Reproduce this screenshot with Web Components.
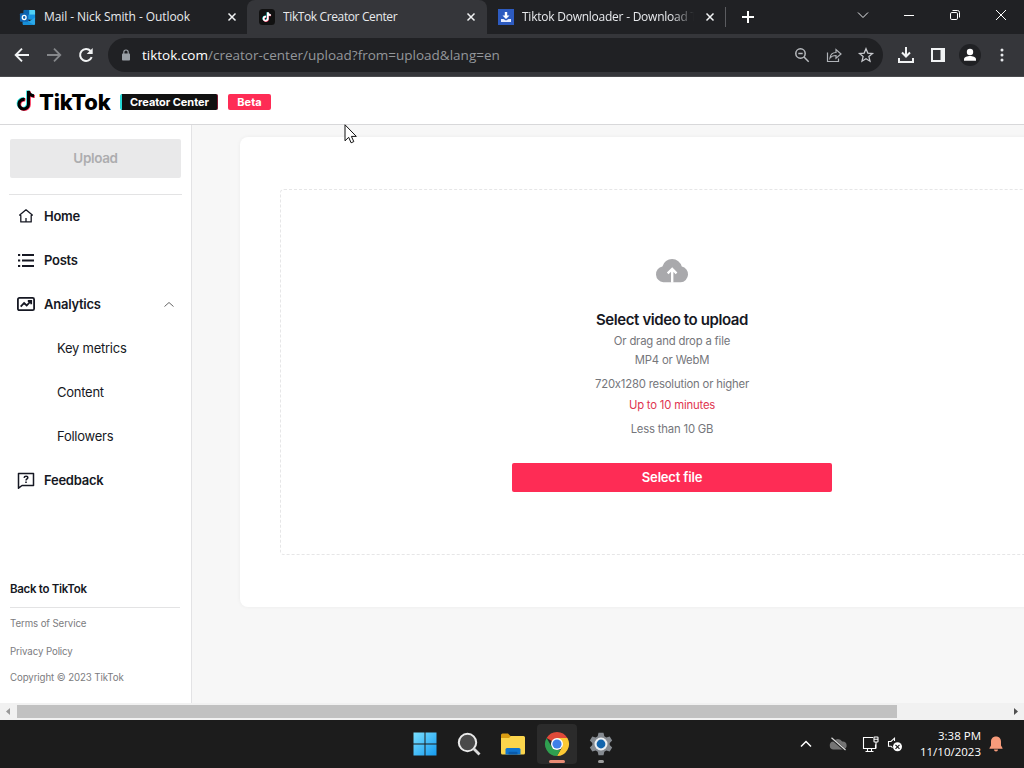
<!DOCTYPE html>
<html lang="en">
<head>
<meta charset="utf-8">
<title>TikTok Creator Center</title>
<style>
html, body {
  margin: 0;
  height: 100%;
  overflow: hidden;
}
body {
  font-family: "Open Sans", "Noto Sans", sans-serif;
}
</style>
</head>
<body>
<desktop-screen></desktop-screen>

<script>
const icons = {
  outlook: `<svg viewBox="0 0 18 18"><rect x="5" y="1" width="12" height="10" rx="1" fill="#28a8ea"/><path d="M5 1h6v5H5z" fill="#0a64ad"/><path d="M11 1h5a1 1 0 0 1 1 1v4h-6z" fill="#50d0f5"/><path d="M11 6h6v5h-6z" fill="#1490df"/><path d="M4 9l7 4 6-4v7a1 1 0 0 1-1 1H5a1 1 0 0 1-1-1z" fill="#2ba9ea"/><path d="M4 10l12 7H5a1 1 0 0 1-1-1z" fill="#178fd8"/><rect x="1" y="4.500" width="9" height="9" rx="1" fill="#1066b5"/><ellipse cx="5.500" cy="9" rx="2" ry="2.200" fill="none" stroke="#fff" stroke-width="1.400"/></svg>`,
  tiktokTab: `<svg viewBox="0 0 16 16"><rect width="16" height="16" rx="3.500" fill="#111"/><g fill="none" stroke-width="1.700"><path d="M6.600 7.300a2.100 2.100 0 1 0 1.800 2.100V3.200c.2 1.700 1.300 2.600 3 2.700" stroke="#25f4ee"/><path d="M7.300 7.900a2.100 2.100 0 1 0 1.800 2.100V3.800c.2 1.700 1.300 2.600 3 2.700" stroke="#fe2c55"/><path d="M7 7.600a2.100 2.100 0 1 0 1.800 2.100V3.400c.2 1.700 1.300 2.600 3 2.700" stroke="#fff"/></g></svg>`,
  downloader: `<svg viewBox="0 0 16 16"><rect width="16" height="16" fill="#2d5bc0"/><path d="M6.800 3h2.400v3.600h2.300L8 10 4.500 6.600h2.300z" fill="#fff"/><path d="M3 10h2.500L8 11.500l2.500-1.500H13v3H3z" fill="#e4ecff"/></svg>`,
  close: `<svg viewBox="0 0 10 10"><path d="M1.500 1.500l7 7m0-7l-7 7" stroke="#f1f3f4" stroke-width="1.500"/></svg>`,
  plus: `<svg viewBox="0 0 14 14"><path d="M7 1v12M1 7h12" stroke="#fff" stroke-width="2"/></svg>`,
  chevron: `<svg viewBox="0 0 12 12"><path d="M1 3.500l5 5 5-5" fill="none" stroke="#e8eaed" stroke-width="1"/></svg>`,
  minimize: `<svg viewBox="0 0 12 12"><path d="M1 6.500h10" stroke="#fff"/></svg>`,
  restore: `<svg viewBox="0 0 12 12"><g fill="none" stroke="#fff"><rect x="1.500" y="3.500" width="7" height="7" rx="1.300"/><path d="M3.500 1.500h5a2 2 0 0 1 2 2v5"/></g></svg>`,
  windowClose: `<svg viewBox="0 0 12 12"><path d="M1 1l10 10M11 1L1 11" stroke="#fff"/></svg>`,
  back: `<svg viewBox="0 0 16 16"><path d="M15 8H2M8 1.700L1.700 8 8 14.300" fill="none" stroke="#f1f3f4" stroke-width="1.900"/></svg>`,
  forward: `<svg viewBox="0 0 16 16"><path d="M1 8h13M8 1.700L14.300 8 8 14.300" fill="none" stroke="#85878a" stroke-width="1.800"/></svg>`,
  reload: `<svg viewBox="0 0 16 16"><path d="M13.700 10.200A6 6 0 1 1 12.600 4" fill="none" stroke="#f1f3f4" stroke-width="2"/><path d="M14.700 1v6h-6z" fill="#f1f3f4"/></svg>`,
  lock: `<svg viewBox="0 0 10 12"><rect x="1" y="4.500" width="8" height="7" rx=".8" fill="#9aa0a6"/><path d="M2.800 5V3.200a2.200 2.200 0 0 1 4.400 0V5" fill="none" stroke="#9aa0a6" stroke-width="1.200"/></svg>`,
  zoomOut: `<svg viewBox="0 0 16 16"><g fill="none" stroke="#b8bbbf" stroke-width="1.500"><circle cx="6.500" cy="6.500" r="4.700"/><path d="M10 10l4.700 4.700M4.300 6.500h4.400"/></g></svg>`,
  share: `<svg viewBox="0 0 16 16"><g fill="none" stroke="#b0b3b8" stroke-width="1.200"><path d="M1.500 5.500v9h11v-3"/><path d="M4 11c.5-4 3-5.500 6-5.500V2.500L15 7l-5 4.300V8.500c-2.500 0-4.500.5-6 2.500z"/></g></svg>`,
  star: `<svg viewBox="0 0 16 16"><path d="M8 1.800l1.800 4.300 4.700.4-3.600 3.100 1.100 4.600-4-2.400-4 2.400 1.100-4.600-3.600-3.100 4.700-.4z" fill="none" stroke="#c6c8cc" stroke-width="1.300"/></svg>`,
  download: `<svg viewBox="0 0 18 18"><path d="M9 1v9M5 6.500l4 4 4-4M2 12v4h14v-4" fill="none" stroke="#f1f3f4" stroke-width="2"/></svg>`,
  panel: `<svg viewBox="0 0 14 14"><rect x="1" y="1" width="12" height="12" fill="none" stroke="#f1f3f4" stroke-width="2"/><path d="M9.500 1H13v12H9.500z" fill="#f1f3f4"/></svg>`,
  person: `<svg viewBox="0 0 22 22"><circle cx="11" cy="11" r="11" fill="#202124"/><circle cx="11" cy="8" r="3.200" fill="#fff"/><path d="M5 16.800v-1.600c0-2 3.500-3.200 6-3.200s6 1.200 6 3.200v1.600z" fill="#fff"/></svg>`,
  dots: `<svg viewBox="0 0 4 14"><g fill="#e8eaed"><circle cx="2" cy="2" r="1.500"/><circle cx="2" cy="7" r="1.500"/><circle cx="2" cy="12" r="1.500"/></g></svg>`,
  note: `<svg viewBox="0 0 20 24"><g fill="none" stroke-width="3.200"><path d="M7.800 10.300a5 5 0 1 0 4 4.900V1.500c.2 3.200 2.400 5 5.800 5.200" stroke="#25e6e0"/><path d="M9.400 11.500a5 5 0 1 0 4 4.900V2.700c.2 3.200 2.400 5 5.800 5.200" stroke="#fe2c55"/><path d="M8.600 10.900a5 5 0 1 0 4 4.900V2c.2 3.200 2.400 5 5.800 5.200" stroke="#000"/></g></svg>`,
  home: `<svg viewBox="0 0 18 18"><path d="M9 2.800l6.300 5.300-1.100.5v6.300H3.800V8.600l-1.100-.5zM9 11v4" fill="none" stroke="#161823" stroke-width="1.300" stroke-linejoin="round"/></svg>`,
  list: `<svg viewBox="0 0 18 18"><path d="M1 4h2.200M1 9.500h2.200M1 15h2.200M5 4h12M5 9.500h12M5 15h12" stroke="#161823" stroke-width="1.800"/></svg>`,
  analytics: `<svg viewBox="0 0 18 18"><g fill="none" stroke="#161823" stroke-width="1.800"><rect x=".9" y="2.900" width="16.200" height="12.300" rx="1.500"/><path d="M3.700 11.700L7.100 8l2.600 2.500 4-4.300M10.800 6h3.400v3.300"/></g></svg>`,
  feedback: `<svg viewBox="0 0 18 18"><path d="M1.500 2.500h15v12H5l-3.500 2.700z" fill="none" stroke="#161823" stroke-width="1.500" stroke-linejoin="round"/><path d="M7.100 6.900c.2-2.500 4.100-2.200 3.700 0C10.600 8 9 8 9 9.600" fill="none" stroke="#161823" stroke-width="1.500"/><path d="M8.200 10.600h1.600V12H8.200z" fill="#161823"/></svg>`,
  up: `<svg viewBox="0 0 12 12"><path d="M1.500 8.500l4.500-4 4.500 4" fill="none" stroke="#555" stroke-width=".9"/></svg>`,
  cloud: `<svg viewBox="0 0 33 25"><path d="M8 24.400a7.800 7.800 0 0 1-.8-15.400A9.700 9.700 0 0 1 26 9.200a7.700 7.700 0 0 1-1 15.200z" fill="#a9a9ac"/><path d="M16.700 24.800V12.300M12.300 15.700l4.400-4.200 4.200 4.200" fill="none" stroke="#fff" stroke-width="2.300"/></svg>`,
  left: `<svg viewBox="0 0 4 7"><path d="M4 0v7L0 3.500z" fill="#999"/></svg>`,
  right: `<svg viewBox="0 0 4 7"><path d="M0 0v7l4-3.500z" fill="#505050"/></svg>`,
  cursor: `<svg viewBox="0 0 14 20"><path d="M1 .8v16l3.700-3.500 2.400 5.500 2.700-1.200-2.400-5.200h4.900z" fill="#fff" stroke="#111" stroke-width="1"/></svg>`,
  windows: `<svg viewBox="0 0 24 24"><defs><linearGradient id="g" x2="1" y2="1"><stop stop-color="#7ae0ff"/><stop offset="1" stop-color="#159bf0"/></linearGradient></defs><path d="M.5.500h11v11H.5zM12.500.500h11v11h-11zM.5 12.500h11v11H.5zM12.500 12.500h11v11h-11z" fill="url(#g)"/></svg>`,
  search: `<svg viewBox="0 0 24 24"><circle cx="10.500" cy="10.500" r="8.700" fill="#4a4a4a" stroke="#e9e9e9" stroke-width="2"/><path d="M17 17l5.500 5.500" stroke="#dadada" stroke-width="2.800"/></svg>`,
  folder: `<svg viewBox="0 0 26 24"><path d="M1 3a1.500 1.500 0 0 1 1.500-1.500H8l2.500 2.500H15v6H1z" fill="#d99c12"/><path d="M1 6h8l2-2h12.500A1.500 1.500 0 0 1 25 5.500V21a1.500 1.500 0 0 1-1.500 1.500h-21A1.500 1.500 0 0 1 1 21z" fill="#fbd54c"/><path d="M5.500 22.500v-5A1.500 1.500 0 0 1 7 16h12a1.500 1.500 0 0 1 1.500 1.500v5z" fill="#0f74cf"/><path d="M8.500 22.500v-1.700a1 1 0 0 1 1-1h7a1 1 0 0 1 1 1v1.700z" fill="#0a5bac"/></svg>`,
  chrome: `<svg viewBox="0 0 24 24"><path d="M12 12L1.600 6A12 12 0 0 1 22.400 6z" fill="#e04a3a"/><path d="M12 6h10.400A12 12 0 0 1 12 24l5.200-9z" fill="#fcc934"/><path d="M1.600 6l5.200 9 5.200 3h3.400L12 24A12 12 0 0 1 1.600 6z" fill="#2f9f50"/><circle cx="12" cy="12" r="6" fill="#fff"/><circle cx="12" cy="12" r="4.600" fill="#3f7fe8"/></svg>`,
  settings: `<svg viewBox="0 0 24 24"><path d="M9.500.8h5l.8 3.400 2 1.200 3.400-1 2.500 4.200L20.700 11v2l2.500 2.400-2.500 4.200-3.400-1-2 1.200-.8 3.400h-5l-.8-3.400-2-1.200-3.400 1-2.500-4.200L3.300 13v-2L.8 8.600l2.500-4.200 3.400 1 2-1.200z" fill="#858a90"/><circle cx="12" cy="12" r="6.500" fill="#eceff2"/><circle cx="12" cy="12" r="4.400" fill="#1265ad"/></svg>`,
  trayUp: `<svg viewBox="0 0 12 8"><path d="M1 6.500l5-5 5 5" fill="none" stroke="#fff" stroke-width="1.500"/></svg>`,
  cloudOff: `<svg viewBox="0 0 18 14"><path d="M5 12.500a4 4 0 0 1-.5-8 5 5 0 0 1 8.700 0A4 4 0 0 1 14 12.500z" fill="#747474"/><path d="M2 .8L16 13" stroke="#1c1c1c" stroke-width="2.400"/><path d="M2.500.8L16.500 13" stroke="#ddd" stroke-width="1.200"/></svg>`,
  network: `<svg viewBox="0 0 17 17"><g fill="none" stroke="#fff" stroke-width="1.100"><path d="M11 1.500H1.500v11h12V8.500M5.500 12.500v3m4-3v3M3.500 15.500h8"/><rect x="12" y="1" width="4" height="5" rx=".6"/><path d="M12 3.200h4M14 6v6.500"/></g></svg>`,
  volume: `<svg viewBox="0 0 16 15"><path d="M7.500 4V1.200L4 4.500H1.500v4.700H4l1.500 1.500" fill="none" stroke="#fff" stroke-width="1.100"/><circle cx="10.500" cy="9.800" r="4.500" fill="#fff"/><path d="M8.500 7.800l4 4m0-4l-4 4" stroke="#1c1c1c" stroke-width="1.200"/></svg>`,
  bell: `<svg viewBox="0 0 14 16"><path d="M7 .5c3.200 0 5 2.200 5 5v4l1.500 2.500v.8H.5V12L2 9.500v-4c0-2.800 1.800-5 5-5zM5 13.600h4a2 2 0 0 1-4 0z" fill="#f79b7b"/></svg>`
};

class UiIcon extends HTMLElement {
  constructor() {
    super();
    this.attachShadow({ mode: "open" });
  }
  connectedCallback() {
    const w = this.getAttribute("w") || 16;
    const h = this.getAttribute("h") || w;
    this.shadowRoot.innerHTML = `
<style>
:host { display: block; flex: none; width: ${w}px; height: ${h}px; }
svg { display: block; width: 100%; height: 100%; overflow: visible; }
</style>${icons[this.getAttribute("name")]}`;
  }
}
customElements.define("ui-icon", UiIcon);

// registers an element whose shadow root is cloned from the given markup
function define(name, html) {
  const template = document.createElement("template");
  template.innerHTML = html;
  customElements.define(name, class extends HTMLElement {
    constructor() {
      super();
      this.attachShadow({ mode: "open" });
      this.shadowRoot.appendChild(template.content.cloneNode(true));
    }
  });
}

define("browser-tab", `
<style>
:host {
  display: flex;
  align-items: center;
  box-sizing: border-box;
  width: 240px;
  height: 34px;
  padding: 0 11px 0 12px;
  color: #e8eaed;
  font-size: 12px;
}
:host([active]) { background: #35363a; border-radius: 8px 8px 0 0; }
.title {
  flex: 1;
  margin-left: 8px;
  white-space: nowrap;
  overflow: hidden;
  line-height: 20px;
}
:host([fade]) .title { -webkit-mask-image: linear-gradient(90deg, #000 150px, transparent 172px); }
ui-icon { margin-left: 6px; }
</style>
<slot name="icon"></slot>
<div class="title"><slot></slot></div>
<ui-icon name="close" w="10"></ui-icon>
`);

define("tab-strip", `
<style>
:host { display: flex; height: 34px; background: #202124; align-items: center; }
.first { width: 247px; padding: 0 10px 0 19px; }
.last { padding-left: 11px; padding-right: 12px; }
.sep { width: 1px; height: 20px; background: #5b5c60; margin-left: -2px; }
.plus { margin-left: 15px; }
.controls { display: flex; margin-left: auto; padding: 0 17px 5px 0; gap: 34px; }
</style>
<browser-tab class="first"><ui-icon slot="icon" name="outlook" w="17"></ui-icon><span style="letter-spacing:-.08px">Mail - Nick Smith - Outlook</span></browser-tab>
<browser-tab active><ui-icon slot="icon" name="tiktokTab" w="16"></ui-icon><span style="letter-spacing:-.38px">TikTok Creator Center</span></browser-tab>
<browser-tab class="last" fade><ui-icon slot="icon" name="downloader" w="16"></ui-icon><span style="letter-spacing:-.24px">Tiktok Downloader - Download TikTok</span></browser-tab>
<div class="sep"></div>
<ui-icon class="plus" name="plus" w="14"></ui-icon>
<div class="controls">
  <ui-icon name="chevron" w="12"></ui-icon>
  <ui-icon name="minimize" w="12"></ui-icon>
  <ui-icon name="restore" w="12"></ui-icon>
  <ui-icon name="windowClose" w="12"></ui-icon>
</div>
`);

define("address-bar", `
<style>
:host {
  display: flex;
  align-items: center;
  box-sizing: border-box;
  height: 43px;
  padding: 0 19px 0 14px;
  background: #35363a;
  border-bottom: 1px solid #4a4b4e;
}
.field {
  display: flex;
  align-items: center;
  box-sizing: border-box;
  width: 775px;
  height: 34px;
  padding: 0 9px 0 13px;
  margin: 0 14px 0 14px;
  border-radius: 17px;
  background: #202124;
  font-size: 13.500px;
  color: #94979b;
}
.url { flex: 1; margin-left: 11px; line-height: 22px; white-space: nowrap; }
.url b { font-weight: 400; color: #fff; }
.actions { display: flex; gap: 16px; }
</style>
<ui-icon name="back" w="16"></ui-icon>
<ui-icon name="forward" w="16" style="margin-left:16px"></ui-icon>
<ui-icon name="reload" w="16" style="margin-left:16px"></ui-icon>
<div class="field">
  <ui-icon name="lock" w="10" h="12"></ui-icon>
  <div class="url"><b>tiktok.com</b>/creator-center/upload?from=upload&amp;lang=en</div>
  <div class="actions">
    <ui-icon name="zoomOut" w="16"></ui-icon>
    <ui-icon name="share" w="16"></ui-icon>
    <ui-icon name="star" w="16"></ui-icon>
  </div>
</div>
<ui-icon name="download" w="18"></ui-icon>
<ui-icon name="panel" w="14" style="margin-left:16px"></ui-icon>
<ui-icon name="person" w="22" style="margin-left:14px"></ui-icon>
<ui-icon name="dots" w="4" h="14" style="margin-left:19px"></ui-icon>
`);

define("site-header", `
<style>
:host {
  display: flex;
  align-items: center;
  box-sizing: border-box;
  height: 48px;
  padding: 2px 0 0 16px;
  background: #fff;
  border-bottom: 1px solid #d8d8da;
  font-family: Inter, "Liberation Sans", sans-serif;
}
.brand { margin-left: 3px; width: 81px; font-size: 22px; font-weight: 800; letter-spacing: -.2px; line-height: 24px; color: #000; }
.tag {
  box-sizing: border-box;
  height: 16px;
  border-radius: 2px;
  font-size: 11px;
  font-weight: 700;
  line-height: 16px;
  text-align: center;
  color: #fff;
}
.dark { width: 98px; background: #111; border-left: 2px solid #25d9d5; border-right: 1px solid #7d1830; letter-spacing: -.05px; }
.beta { width: 43px; margin-left: 10px; background: #fe2c55; }
</style>
<ui-icon name="note" w="20" h="23" style="margin-top:-3px"></ui-icon>
<div class="brand">TikTok</div>
<div class="tag dark">Creator Center</div>
<div class="tag beta">Beta</div>
`);

define("nav-item", `
<style>
:host {
  display: flex;
  align-items: center;
  height: 44px;
  padding: 0 16px 0 17px;
  font-size: 13px;
  font-weight: 600;
  letter-spacing: -.25px;
  color: #161823;
}
:host([sub]) { padding-left: 57px; font-weight: 400; }
.text { flex: 1; }
::slotted([slot=icon]) { margin-right: 9px; }
</style>
<slot name="icon"></slot>
<div class="text"><slot></slot></div>
<slot name="end"></slot>
`);

define("side-bar", `
<style>
:host {
  display: flex;
  flex-direction: column;
  flex: none;
  box-sizing: border-box;
  width: 192px;
  background: #fff;
  border-right: 1px solid #e3e3e5;
}
.upload {
  height: 39px;
  margin: 14px 10px 16px;
  border-radius: 2px;
  background: #e9e9ea;
  color: #adadaf;
  font-size: 13.500px;
  font-weight: 600;
  letter-spacing: -.35px;
  line-height: 39px;
  text-align: center;
}
nav { margin-top: -1px; }
.line { height: 1px; background: #e3e3e4; margin: 0 9px; }
.foot { margin-top: auto; padding-bottom: 15px; font-size: 9.700px; color: #7c7c80; }
.foot div { padding-left: 10px; line-height: 20px; letter-spacing: -.1px; }
.foot .back { font-size: 11.500px; font-weight: 600; letter-spacing: -.3px; color: #161823; margin-bottom: 8px; }
.foot .line { padding: 0; margin: 0 11px 6px 10px; line-height: 0; }
</style>
<div class="upload">Upload</div>
<div class="line"></div>
<nav>
  <nav-item><ui-icon slot="icon" name="home" w="18"></ui-icon>Home</nav-item>
  <nav-item><ui-icon slot="icon" name="list" w="18"></ui-icon>Posts</nav-item>
  <nav-item><ui-icon slot="icon" name="analytics" w="18"></ui-icon>Analytics<ui-icon slot="end" name="up" w="12"></ui-icon></nav-item>
  <nav-item sub>Key metrics</nav-item>
  <nav-item sub>Content</nav-item>
  <nav-item sub>Followers</nav-item>
  <nav-item><ui-icon slot="icon" name="feedback" w="18"></ui-icon>Feedback</nav-item>
</nav>
<div class="foot">
  <div class="back">Back to TikTok</div>
  <div class="line"></div>
  <div style="margin-bottom:8px">Terms of Service</div>
  <div style="margin-bottom:6px">Privacy Policy</div>
  <div>Copyright © 2023 TikTok</div>
</div>
`);

define("upload-card", `
<style>
:host {
  display: block;
  box-sizing: border-box;
  flex: none;
  width: 864px;
  height: 470px;
  margin: 12px 0 0 48px;
  padding: 52px 40px;
  border-radius: 8px;
  background: #fff;
  box-shadow: 0 0 4px rgba(0, 0, 0, .05);
}
.drop {
  display: flex;
  flex-direction: column;
  align-items: center;
  box-sizing: border-box;
  height: 366px;
  padding-top: 67px;
  border: 1px dashed #e6e6e7;
  border-radius: 4px;
  font-size: 11.300px;
  font-feature-settings: "calt" 0;
  letter-spacing: -.18px;
  line-height: 20px;
  color: #75767b;
}
.title { margin-top: 26px; font-size: 15px; font-weight: 600; letter-spacing: -.4px; line-height: 22px; color: #161823; }
.limit { margin: 1px 0 4px; color: #e0344f; }
.select {
  width: 320px;
  height: 29px;
  margin-top: 24px;
  border-radius: 2px;
  background: #fe2c55;
  color: #fff;
  font-size: 13px;
  font-weight: 600;
  line-height: 29px;
  text-align: center;
}
</style>
<div class="drop">
  <ui-icon name="cloud" w="34" h="26"></ui-icon>
  <div class="title">Select video to upload</div>
  <div>Or drag and drop a file</div>
  <div style="line-height:18px;margin-bottom:5px">MP4 or WebM</div>
  <div>720x1280 resolution or higher</div>
  <div class="limit">Up to 10 minutes</div>
  <div>Less than 10 GB</div>
  <div class="select">Select file</div>
</div>
`);

define("scroll-bar", `
<style>
:host { display: flex; align-items: center; height: 17px; padding: 0 6px; background: #f1f1f1; }
.thumb { width: 880px; height: 13px; margin-left: 7px; background: #c1c1c1; }
.right { margin-left: auto; }
</style>
<ui-icon name="left" w="4" h="7"></ui-icon>
<div class="thumb"></div>
<ui-icon class="right" name="right" w="4" h="7"></ui-icon>
`);

define("task-bar", `
<style>
:host {
  display: grid;
  grid-template-columns: 1fr auto 1fr;
  box-sizing: border-box;
  height: 48px;
  padding-left: 2px;
  background: #1c1c1c;
  color: #fff;
}
.apps { grid-column: 2; display: flex; gap: 4px; align-items: center; }
.app {
  display: flex;
  flex-direction: column;
  align-items: center;
  box-sizing: border-box;
  width: 40px;
  height: 40px;
  padding-top: 8px;
  border-radius: 4px;
}
.app.on { background: #2b2b2b; }
.app i { width: 16px; height: 3px; margin-top: 4px; border-radius: 2px; background: #e98c75; }
.app .dot { width: 6px; background: #9c9c9c; }
.tray { display: flex; align-items: center; justify-content: flex-end; padding-right: 21px; }
.clock { width: 72px; margin: 0 8px 0 6px; font-size: 11.500px; line-height: 16px; text-align: right; white-space: nowrap; letter-spacing: 0; }
</style>
<div class="apps">
  <div class="app"><ui-icon name="windows" w="24"></ui-icon></div>
  <div class="app"><ui-icon name="search" w="24"></ui-icon></div>
  <div class="app"><ui-icon name="folder" w="26" h="24"></ui-icon></div>
  <div class="app on"><ui-icon name="chrome" w="24"></ui-icon><i></i></div>
  <div class="app"><ui-icon name="settings" w="24"></ui-icon><i class="dot"></i></div>
</div>
<div class="tray">
  <ui-icon name="trayUp" w="12" h="8"></ui-icon>
  <ui-icon name="cloudOff" w="18" h="14" style="margin-left:17px"></ui-icon>
  <ui-icon name="network" w="17" style="margin-left:15px"></ui-icon>
  <ui-icon name="volume" w="16" h="15" style="margin-left:8px"></ui-icon>
  <div class="clock"><div>3:38 PM</div><div>11/10/2023</div></div>
  <ui-icon name="bell" w="14" h="16"></ui-icon>
</div>
`);

define("desktop-screen", `
<style>
:host { display: flex; flex-direction: column; width: 1024px; height: 768px; overflow: hidden; position: relative; }
.page {
  display: flex;
  flex: 1;
  min-height: 0;
  overflow: hidden;
  background: #f7f7f7;
  font-family: Inter, "Liberation Sans", sans-serif;
}
.cursor { position: absolute; left: 344px; top: 124px; }
</style>
<tab-strip></tab-strip>
<address-bar></address-bar>
<site-header></site-header>
<div class="page">
  <side-bar></side-bar>
  <upload-card></upload-card>
</div>
<scroll-bar></scroll-bar>
<task-bar></task-bar>
<ui-icon class="cursor" name="cursor" w="14" h="20"></ui-icon>
`);
</script>
</body>
</html>
